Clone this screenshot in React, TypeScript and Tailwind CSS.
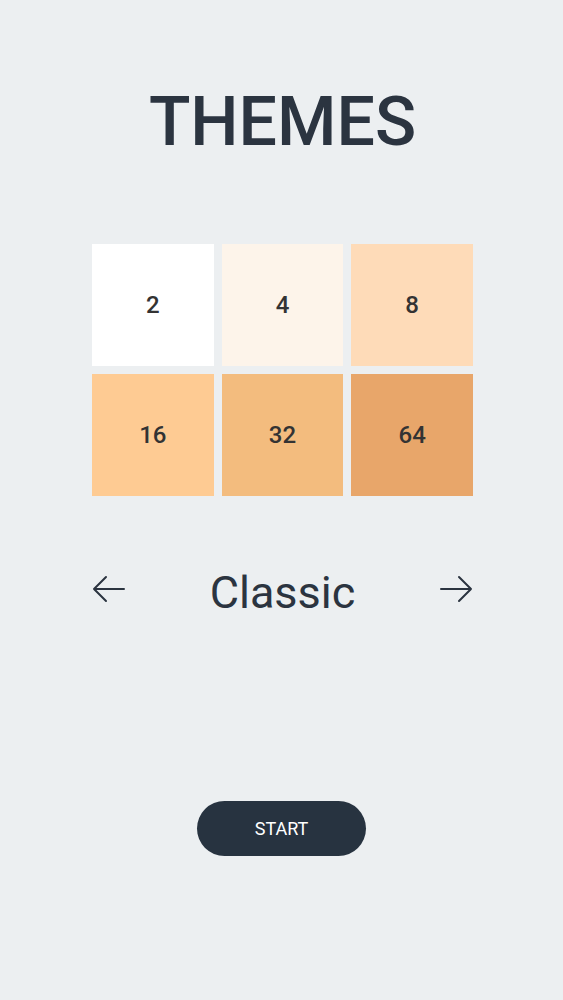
import React from "react";

const tiles = [
  { value: 2, bg: "bg-[#ffffff]" },
  { value: 4, bg: "bg-[#fdf4ea]" },
  { value: 8, bg: "bg-[#fedbb8]" },
  { value: 16, bg: "bg-[#fecb93]" },
  { value: 32, bg: "bg-[#f3bc7e]" },
  { value: 64, bg: "bg-[#e8a66a]" },
];

function Arrow({ dir }: { dir: "left" | "right" }) {
  return (
    <svg width="34" height="28" viewBox="0 0 34 28" fill="none" className={dir === "right" ? "rotate-180" : ""}>
      <path d="M32 14H2M14 2L2 14l12 12" stroke="#2b3440" strokeWidth="2" strokeLinecap="round" strokeLinejoin="round" />
    </svg>
  );
}

export default function App() {
  return (
    <main className="min-h-screen bg-[#eceff1] flex flex-col items-center font-['Roboto',sans-serif] text-[#2b3440]">
      <h1 className="mt-[88px] ml-[2px] text-[68px] leading-none font-medium">THEMES</h1>

      <div className="mt-[88px] ml-[2px] grid grid-cols-3 gap-2 w-[381px]">
        {tiles.map((t) => (
          <div key={t.value} className={`${t.bg} h-[122px] flex items-center justify-center text-[24px] font-medium text-[#333333]`}>
            {t.value}
          </div>
        ))}
      </div>

      <div className="mt-[74px] ml-[2px] w-[381px] flex items-center justify-between">
        <button className="w-[34px] mb-[7px] flex items-center">
          <Arrow dir="left" />
        </button>
        <span className="text-[45px] leading-none">Classic</span>
        <button className="w-[34px] mb-[7px] flex items-center">
          <Arrow dir="right" />
        </button>
      </div>

      <button className="mt-[186px] w-[169px] h-[55px] rounded-full bg-[#273340] text-white text-[18px]">
        START
      </button>
    </main>
  );
}
